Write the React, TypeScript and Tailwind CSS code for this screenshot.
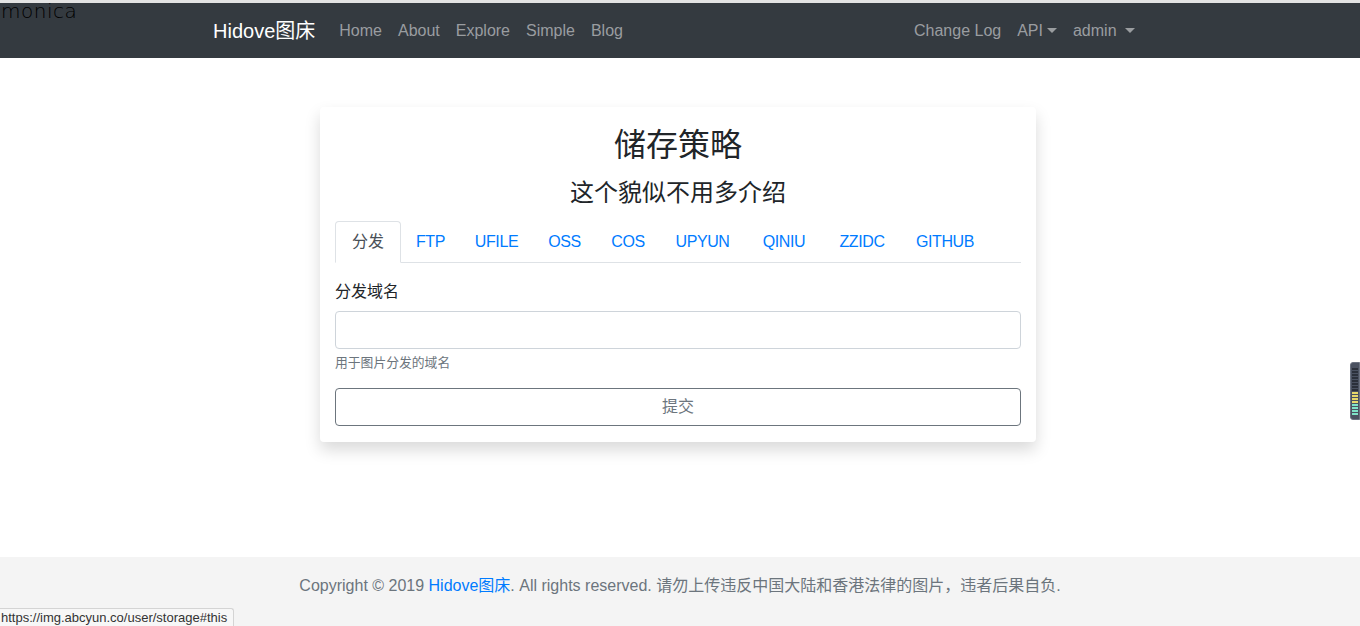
import React from "react";

const FONT = '"Liberation Sans", "Noto Sans CJK SC", sans-serif';

function Caret() {
  return (
    <span className="inline-block w-0 h-0 ml-[4px] align-[3px] border-x-[5px] border-x-transparent border-t-[5px] border-t-current" />
  );
}

const tabs: [string, string][] = [
  ["FTP", "w-[59px]"],
  ["UFILE", "w-[73px]"],
  ["OSS", "w-[63px]"],
  ["COS", "w-[64px]"],
  ["UPYUN", "w-[85px]"],
  ["QINIU", "w-[78px]"],
  ["ZZIDC", "w-[78px]"],
  ["GITHUB", "w-[88px]"],
];

export default function App() {
  return (
    <div
      className="relative min-h-[626px] w-full flex flex-col bg-white text-[#212529] overflow-hidden"
      style={{ fontFamily: FONT }}
    >
      <div className="h-[3px] bg-[#e3e3e3]" />
      <nav className="h-[55px] bg-[#343a40]">
        <div className="w-[960px] mx-auto px-[15px] h-full flex items-center justify-between">
          <div className="flex items-center">
            <span className="text-white text-[20px] leading-[30px] mr-[16px] -ml-[2px] whitespace-nowrap">Hidove图床</span>
            <div className="flex text-[16px] leading-6 text-[#9a9da0] whitespace-nowrap">
              <span className="px-[8px]">Home</span>
              <span className="px-[8px]">About</span>
              <span className="px-[8px]">Explore</span>
              <span className="px-[8px]">Simple</span>
              <span className="px-[8px]">Blog</span>
            </div>
          </div>
          <div className="flex text-[16px] leading-6 text-[#9a9da0] whitespace-nowrap mr-[2px]">
            <span className="px-[8px]">Change Log</span>
            <span className="px-[8px]">
              API
              <Caret />
            </span>
            <span className="px-[8px]">
              admin <Caret />
            </span>
          </div>
        </div>
      </nav>

      <main className="flex-1">
        <div className="ml-[320px] w-[716px] mt-[49px] bg-white rounded-[4px] shadow-[0_0.5rem_1rem_rgba(0,0,0,0.15)] px-[15px] pt-[19px] pb-[16px]">
          <h2 className="text-[32px] leading-[38px] text-center text-[#212529]">储存策略</h2>
          <h4 className="mt-[14px] text-[24px] leading-[29px] text-center text-[#212529]">这个貌似不用多介绍</h4>
          <div className="mt-[14px] flex border-b border-[#dee2e6] whitespace-nowrap">
            <span className="-mb-px w-[66px] text-center py-[8px] text-[16px] leading-6 text-[#495057] bg-white border border-[#dee2e6] border-b-white rounded-t-[4px]">
              分发
            </span>
            {tabs.map(([t, w]) => (
              <span
                key={t}
                className={"-mb-px text-center py-[8px] text-[16px] leading-6 text-[#007bff] border border-transparent tracking-[-0.4px] " + w}
              >
                {t}
              </span>
            ))}
          </div>
          <div className="pt-[17px]">
            <div className="text-[16px] leading-6 mb-[7px]">分发域名</div>
            <div className="h-[38px] border border-[#ced4da] rounded-[4px]" />
            <div className="mt-[4px] text-[12.8px] leading-[19px] text-[#6c757d]">用于图片分发的域名</div>
            <button className="mt-[16px] w-full h-[38px] border border-[#6c757d] rounded-[4px] text-[16px] text-[#6c757d] bg-white">
              提交
            </button>
          </div>
        </div>
      </main>

      <footer className="h-[69px] bg-[#f4f4f4] pt-[17px] text-center text-[16px] leading-6 text-[#6c757d] whitespace-nowrap">
        Copyright © 2019 <span className="text-[#007bff]">Hidove图床</span>. All rights reserved. 请勿上传违反中国大陆和香港法律的图片，违者后果自负.
      </footer>

      {/* overlays */}
      <div
        className="absolute left-[1px] top-0 text-[20px] leading-[22px] text-black tracking-[0.5px]"
        style={{ fontFamily: '"DejaVu Sans", sans-serif', fontWeight: 300 }}
      >
        monica
      </div>
      <div className="absolute left-0 bottom-0 h-[18px] pl-[1px] pr-[6px] bg-[#f7f7f7] border-t border-r border-[#d4d4d4] rounded-tr-[3px] text-[13px] leading-[17px] text-[#333] whitespace-nowrap">
        https://img.abcyun.co/user/storage#this
      </div>
      <div className="absolute right-0 top-[362px] w-[10px] h-[58px] bg-[#4a5160] rounded-l-[3px] border border-[#6b7280] flex flex-col items-center justify-center gap-[1px]">
        {Array.from({ length: 16 }).map((_, i) => (
          <div
            key={i}
            className={
              "w-[6px] h-[2px] " +
              (i < 8 ? "bg-[#2b303a]" : i < 12 ? "bg-[#e6d86a]" : "bg-[#7fe3c8]")
            }
          />
        ))}
      </div>
    </div>
  );
}
